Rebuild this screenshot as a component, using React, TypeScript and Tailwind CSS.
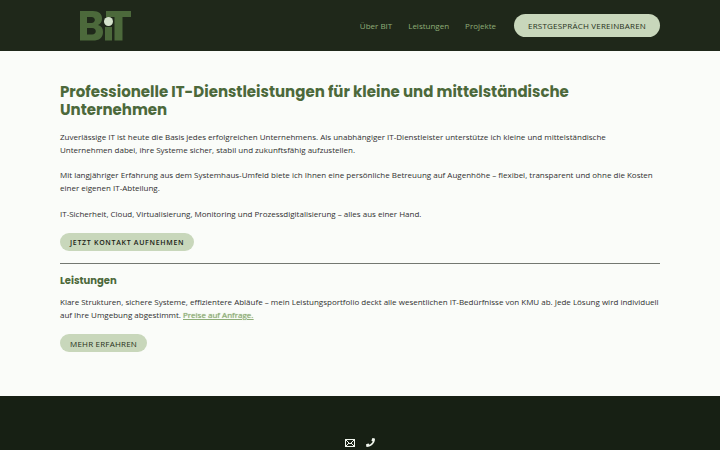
import { FaPhone } from 'react-icons/fa';

const navItems = ['Über BIT', 'Leistungen', 'Projekte'];

function Logo() {
  return (
    <svg viewBox="0 0 52 30" className="h-[30px] w-[52px]" role="img" aria-label="BIT">
      <path
        fill="#4c693b"
        fillRule="evenodd"
        d="M0 0H13C19 0 22 3 22 7.500C22 10.500 20.500 13 18 14C21.500 15 23 17.500 23 21C23 27 19 29.500 13 29.500H0ZM7 6V12H11.500C16 12 16 6 11.500 6ZM7 17V23.500H12C17 23.500 17 17 12 17Z"
      />
      <path fill="#4c693b" d="M25 16H32V29.500H25ZM26 0H51V6H42.500V29.500H34.500V6H26Z" />
      <circle cx="28.500" cy="10.500" r="4.500" fill="#d5e2cc" />
    </svg>
  );
}

export default function App() {
  return (
    <div className="flex min-h-screen flex-col bg-[#fafcf9] font-['Open_Sans',sans-serif] text-[8px] leading-[13px] text-[#303030]">
      <header className="bg-[#1f281a] px-5">
        <div className="mx-auto flex h-[51px] max-w-[600px] items-center justify-between">
          <a href="#" className="ml-5"><Logo /></a>
          <div className="flex items-center">
            <nav className="flex gap-4 pr-[18px] text-[#8fae78]">
              {navItems.map((item) => <a key={item} href="#">{item}</a>)}
            </nav>
            <button className="h-[23px] rounded-full bg-[#c8d7bb] px-[14px] tracking-wide text-[#273120]">
              ERSTGESPRÄCH VEREINBAREN
            </button>
          </div>
        </div>
      </header>
      <main className="px-5 pt-8 pb-11">
        <div className="mx-auto flex max-w-[600px] flex-col items-start">
          <h1 className="font-['Poppins','Inter',sans-serif] text-[15px] leading-[18px] font-bold text-[#4c693b]">
            Professionelle IT-Dienstleistungen für kleine und mittelständische Unternehmen
          </h1>
          <p className="mt-[11px]">
            Zuverlässige IT ist heute die Basis jedes erfolgreichen Unternehmens. Als unabhängiger IT-Dienstleister unterstütze ich kleine und mittelständische Unternehmen dabei, ihre Systeme sicher, stabil und zukunftsfähig aufzustellen.
          </p>
          <p className="mt-3">
            Mit langjähriger Erfahrung aus dem Systemhaus-Umfeld biete ich Ihnen eine persönliche Betreuung auf Augenhöhe – flexibel, transparent und ohne die Kosten einer eigenen IT-Abteilung.
          </p>
          <p className="mt-[13px]">
            IT-Sicherheit, Cloud, Virtualisierung, Monitoring und Prozessdigitalisierung – alles aus einer Hand.
          </p>
          <button className="mt-[13px] h-[18px] rounded-full bg-[#c8d7bb] px-[10px] text-[7px] font-semibold tracking-widest text-[#192114]">
            JETZT KONTAKT AUFNEHMEN
          </button>
          <hr className="mt-3 w-full border-[#737871]" />
          <h2 className="mt-[10px] font-['Poppins','Inter',sans-serif] text-[10px] font-bold text-[#4c693b]">Leistungen</h2>
          <p className="mt-2">
            Klare Strukturen, sichere Systeme, effizientere Abläufe – mein Leistungsportfolio deckt alle wesentlichen IT-Bedürfnisse von KMU ab. Jede Lösung wird individuell auf Ihre Umgebung abgestimmt.{' '}
            <a href="#" className="text-[#8fae78] underline [text-shadow:0_0_1px_#8fae78]">Preise auf Anfrage.</a>
          </p>
          <button className="mt-[13px] h-[18px] rounded-full bg-[#c8d7bb] px-[10px] tracking-wide text-[#273120]">
            MEHR ERFAHREN
          </button>
        </div>
      </main>
      <footer className="flex min-h-[54px] grow justify-center gap-[11px] bg-[#172014] pt-[42px] text-[#f1f6ee]">
        <a href="#" aria-label="E-Mail">
          <svg viewBox="0 0 10 10" className="size-[10px]" fill="none" stroke="currentColor">
            <rect x="0.500" y="1.500" width="9" height="7" />
            <path d="m1 2 4 4 4-4M1 8l3-3M9 8 6 5" />
          </svg>
        </a>
        <a href="#" aria-label="Telefon"><FaPhone className="size-[9px]" /></a>
      </footer>
    </div>
  );
}
